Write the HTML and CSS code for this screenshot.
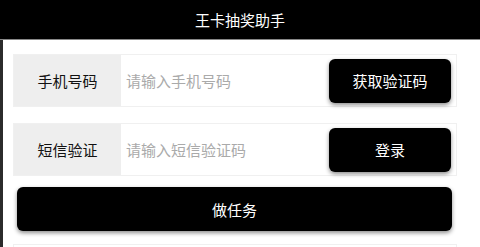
FILE: index.html
```html
<!DOCTYPE html>
<html lang="zh-CN">
<head>
    <meta charset="UTF-8">
    <meta name="viewport" content="width=device-width, initial-scale=1.0">
    <title>王卡抽奖助手</title>
    <link rel="stylesheet" href="styles.css">
</head>
<body>

    <!-- Top bar -->
    <div class="header">王卡抽奖助手</div>

    <div class="page">
        <!-- Phone number -->
        <div class="form-row">
            <div class="form-label">手机号码</div>
            <input type="text" class="form-input" placeholder="请输入手机号码">
            <button class="small-btn">获取验证码</button>
        </div>

        <!-- SMS code -->
        <div class="form-row">
            <div class="form-label">短信验证</div>
            <input type="text" class="form-input" placeholder="请输入短信验证码">
            <button class="small-btn">登录</button>
        </div>

        <button class="big-btn">做任务</button>

        <div class="form-row"></div>
    </div>

</body>
</html>
```

FILE: styles.css
```css
* {
    box-sizing: border-box;
    margin: 0;
    padding: 0;
}

body {
    font-family: 'Noto Sans CJK SC', 'Noto Sans', sans-serif;
    font-size: 15px;
    background: #fff;
    color: #111;
}

/* Header bar */
.header {
    height: 40px;
    line-height: 39px;
    background: #000;
    color: #fff;
    text-align: center;
    border-bottom: 1px solid #888;
}

.page {
    border-left: 3px solid #2b2b2b;
    min-height: 207px;
    padding: 14px 23px 0 10px;
}

/* Form rows */
.form-row {
    display: flex;
    align-items: center;
    height: 53px;
    border: 1px solid #f0f0f0;
    margin-bottom: 16px;
}

.form-label {
    width: 107px;
    height: 100%;
    background: #eee;
    display: flex;
    align-items: center;
    justify-content: center;
    color: #111;
}

.form-input {
    flex: 1;
    min-width: 0;
    height: 100%;
    border: none;
    outline: none;
    padding-left: 5px;
    font-family: inherit;
    font-size: 15px;
    color: #111;
}

.form-input::placeholder {
    color: #aaa;
}

/* Buttons */
.small-btn,
.big-btn {
    background: #000;
    color: #fff;
    border: none;
    border-radius: 6px;
    font-family: inherit;
    font-size: 15px;
    box-shadow: 0 2px 4px rgba(0, 0, 0, 0.45);
    cursor: pointer;
}

.small-btn {
    width: 122px;
    height: 44px;
    margin-right: 5px;
}

.big-btn {
    display: block;
    width: 435px;
    height: 44px;
    margin: -5px 0 13px 4px;
}
```
